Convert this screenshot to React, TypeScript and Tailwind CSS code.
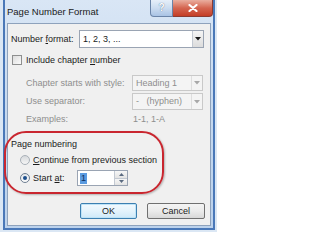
function Caret({ dim = false }: { dim?: boolean }) {
  return (
    <svg width="6" height="4" viewBox="0 0 6 4">
      <path d="M0 0 L6 0 L3 3.5 Z" fill={dim ? "#a8a8a8" : "#1a1a1a"} />
    </svg>
  );
}

function Combo({ value, width, height, dim = false }: { value: string; width: string; height: string; dim?: boolean }) {
  return (
    <div
      className={`flex items-stretch border ${width} ${height} ${
        dim ? "border-[#c9c9c9] bg-[#f4f4f4] text-[#8e8e8e]" : "border-[#9aa4b3] bg-white text-[#1b1b1b]"
      }`}
    >
      <span className="flex-1 flex items-center pl-[3px] whitespace-pre">{value}</span>
      <span
        className={`w-[11px] flex items-center justify-center border-l ${
          dim ? "border-[#dedede] bg-[#f4f4f4]" : "border-[#c3c9d2] bg-gradient-to-b from-[#f5f5f5] to-[#dcdcdc]"
        }`}
      >
        <Caret dim={dim} />
      </span>
    </div>
  );
}

function Radio({ checked = false }: { checked?: boolean }) {
  return (
    <span
      className={`w-[10px] h-[10px] rounded-full border flex items-center justify-center ${
        checked ? "border-[#6f7f92] bg-gradient-to-b from-[#e2e6ea] to-[#fbfbfb]" : "border-[#a9b0b8] bg-gradient-to-b from-[#d6d9dc] to-[#f6f6f6]"
      }`}
    >
      {checked && <span className="w-[4px] h-[4px] rounded-full bg-[#1d4f8c]" />}
    </span>
  );
}

export default function App() {
  return (
    <div className="w-[217px] h-[232px] bg-[#dbe7f4] font-['Liberation_Sans',Arial,sans-serif] text-[9px] leading-none text-[#1b1b1b] pl-[3px] pr-[2px] pb-[2px] flex flex-col">
      <div className="flex-1 flex flex-col border-x-2 border-b-2 border-[#4a78b8] bg-gradient-to-b from-[#d9e6f5] via-[#c6d9ef] to-[#bcd2ec] px-[2px] pb-[2px]">
        {/* title bar */}
        <div className="h-[23px] flex items-start shrink-0">
          <span className="pt-[7px] text-[9.5px] text-[#1a1a1a]">Page Number Format</span>
          <div className="ml-auto -mr-[2px] flex">
            <div className="w-[23px] h-[17px] rounded-bl-[4px] border border-t-0 border-[#6a84a8] bg-gradient-to-b from-[#e6eff9] via-[#cbdcf0] to-[#a9c3e4] flex items-center justify-center text-[10px] font-bold text-white [text-shadow:0_0_1px_#2b4a72]">
              ?
            </div>
            <div className="w-[40px] h-[17px] rounded-br-[4px] border border-t-0 border-l-0 border-[#8b3b32] bg-gradient-to-b from-[#e9ae9f] via-[#d46550] to-[#c43d26] flex items-center justify-center">
              <svg width="10" height="8" viewBox="0 0 10 8">
                <path d="M1.5 1 L8.5 7 M8.5 1 L1.5 7" stroke="#ffffff" strokeWidth="2.2" strokeLinecap="round" />
              </svg>
            </div>
          </div>
        </div>

        {/* client area */}
        <div className="flex-1 bg-[#f0f0f0] border border-[#8ea2bc] px-[3px] flex flex-col">
          <div className="mt-[6px] flex items-center">
            <span className="w-[68px]">
              Number <span className="underline">f</span>ormat:
            </span>
            <Combo value="1, 2, 3, ..." width="w-[125px]" height="h-[18px]" />
          </div>

          <div className="mt-[7px] flex items-center">
            <span className="ml-[1px] w-[10px] h-[10px] border border-[#8e8f8f] bg-gradient-to-br from-[#dcdcdc] to-[#fbfbfb]" />
            <span className="ml-[4px]">
              Include chapter <span className="underline">n</span>umber
            </span>
          </div>

          <div className="mt-[10px] flex items-center text-[#8e8e8e]">
            <span className="pl-[15px] w-[121px]">Chapter starts with style:</span>
            <Combo value="Heading 1" width="w-[71px]" height="h-[16px]" dim />
          </div>

          <div className="mt-[2px] flex items-center text-[#8e8e8e]">
            <span className="pl-[15px] w-[121px]">Use separator:</span>
            <Combo value="-   (hyphen)" width="w-[71px]" height="h-[17px]" dim />
          </div>

          <div className="mt-[4px] h-[10px] flex items-center text-[#8e8e8e]">
            <span className="pl-[15px] w-[122px]">Examples:</span>
            <span>1-1, 1-A</span>
          </div>

          {/* highlighted page numbering group */}
          <div className="mt-[7px] -ml-[7px] w-[160px] h-[63px] border-2 border-[#c9262f] rounded-[22px] shadow-[1px_1px_2px_rgba(0,0,0,0.25)] pl-[5px] pt-[6px] flex flex-col">
            <span className="h-[10px] flex items-center">Page numbering</span>
            <div className="mt-[6px] ml-[9px] flex items-center">
              <Radio />
              <span className="ml-[3px]">
                <span className="underline">C</span>ontinue from previous section
              </span>
            </div>
            <div className="mt-[5px] ml-[9px] flex items-center">
              <Radio checked />
              <span className="ml-[3px] w-[44px]">
                Start <span className="underline">a</span>t:
              </span>
              <div className="w-[51px] h-[16px] border border-[#9aa4b3] bg-white flex items-stretch">
                <span className="flex-1 flex items-center pl-[2px]">
                  <span className="bg-[#5b9be0] text-[#0d2d5c] px-[1px] h-[11px] flex items-center">1</span>
                </span>
                <span className="w-[13px] flex flex-col border-l border-[#c3c9d2]">
                  <span className="flex-1 flex items-center justify-center bg-gradient-to-b from-[#f7f7f7] to-[#e3e3e3] border-b border-[#c3c9d2]">
                    <svg width="5" height="3" viewBox="0 0 5 3">
                      <path d="M0 3 L5 3 L2.5 0 Z" fill="#5a6a80" />
                    </svg>
                  </span>
                  <span className="flex-1 flex items-center justify-center bg-gradient-to-b from-[#f7f7f7] to-[#e3e3e3]">
                    <svg width="5" height="3" viewBox="0 0 5 3">
                      <path d="M0 0 L5 0 L2.5 3 Z" fill="#5a6a80" />
                    </svg>
                  </span>
                </span>
              </div>
            </div>
          </div>

          <div className="mt-[9px] flex justify-end gap-[10px] pr-[2px]">
            <button className="w-[57px] h-[16px] rounded-[2px] border border-[#3c7fb1] bg-gradient-to-b from-[#f2f9fe] via-[#e4f3fc] to-[#cfe9f9] shadow-[inset_0_0_0_1px_#bfe3f7] text-[9px] text-[#1b1b1b] flex items-center justify-center">
              OK
            </button>
            <button className="w-[58px] h-[16px] rounded-[2px] border border-[#707070] bg-gradient-to-b from-[#f4f4f4] via-[#ebebeb] to-[#d8d8d8] text-[9px] text-[#1b1b1b] flex items-center justify-center">
              Cancel
            </button>
          </div>
        </div>
      </div>
    </div>
  );
}
